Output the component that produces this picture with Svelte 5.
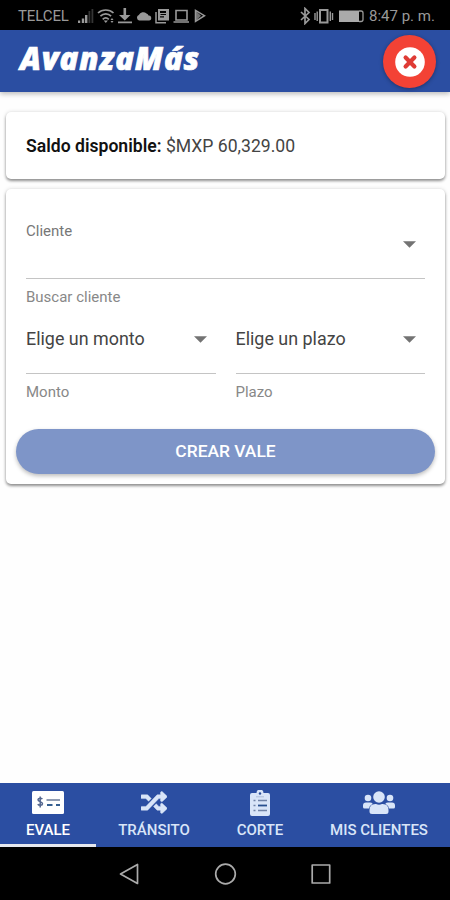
<script>
  const tabs = [
    { id: 'evale', label: 'EVALE', width: 96 },
    { id: 'transito', label: 'TRÁNSITO', width: 116 },
    { id: 'corte', label: 'CORTE', width: 96 },
    { id: 'clientes', label: 'MIS CLIENTES', width: 142 },
  ];
  let active = $state('evale');
</script>

{#snippet caret()}
  <svg class="caret" width="13" height="7" viewBox="0 0 13 7"><path d="M0 .3h13L6.5 6.7z" fill="#737373" /></svg>
{/snippet}

<div class="phone">
  <div class="status">
    <span class="carrier">TELCEL</span>
    <svg class="sys-left" width="130" height="18" viewBox="0 0 130 18" fill="#999">
      <path d="M0 13.500h2.200V16H0zM3.800 11.500h2.400V16H3.800zM7 8h2.400v8H7z" />
      <path d="M10.500 4h1.800v12h-1.800zM13.500 2h1.800v14h-1.800z" opacity=".35" />
      <g fill="none" stroke="#999" stroke-width="1.700">
        <path d="M20 6c4.300-4 11.200-4 15.500 0M22.400 9.200c3-3 7.700-3 10.700 0M24.700 12.300c1.800-1.700 4.300-1.700 6.100 0" />
      </g>
      <path d="M25.700 13.500h4.200l-2.100 2.500zM32.500 13l1.500-2 1.500 2zM32.500 14l1.500 2 1.500-2z" />
      <path d="M45.500 1h2.600v7h4.400l-5.700 5.500L41 8h4.500zM40 14.600h14v1.700H40z" />
      <path d="M61 13.500a3 3 0 0 1-.2-5.600 5 5 0 0 1 7.700-1.500 3 3 0 0 1 2 2.100 2.500 2.500 0 0 1 .5 5z" />
      <path fill-rule="evenodd" d="M80 2h11v11.500H80zM82 4v2h6v1h-5.500v1H88V4zM82 9.300v1.200h4V9.300z" />
      <path d="M78 5v10.800h10" fill="none" stroke="#999" stroke-width="1.500" />
      <path d="M98 3.500h11v9.500H98zM95.500 15h15.500" fill="none" stroke="#999" stroke-width="1.600" />
      <path d="M117.500 3.300 126.500 8.700l-9 5.600z" fill="none" stroke="#999" stroke-width="1.500" />
      <path d="M118 4l5 4.700-5 5z" opacity=".75" />
    </svg>
    <svg class="sys-right" width="66" height="18" viewBox="0 0 66 18">
      <path d="M1 5l8 7.500-4 4V1.500l4 4L1 13" fill="none" stroke="#999" stroke-width="1.700" />
      <path d="M20 3h7.500v12.500H20z" fill="none" stroke="#999" stroke-width="2" />
      <path d="M15 6v7M17.200 4.500v9.500M30.300 4.500v9.500M32.500 6v7" fill="none" stroke="#999" stroke-width="1.400" />
      <rect x="39" y="3.500" width="20" height="11.500" fill="#aaa" />
      <path d="M59 4h2q2 0 2 2v6.500q0 2-2 2h-2" fill="none" stroke="#999" stroke-width="1.300" />
    </svg>
    <span class="clock">8:47 p. m.</span>
  </div>

  <header>
    <h1>AvanzaMás</h1>
    <button class="close" aria-label="Cerrar">
      <svg width="30" height="30" viewBox="0 0 30 30">
        <circle cx="15" cy="15" r="14.800" fill="#fff" />
        <path d="M10.600 10.600l8.800 8.800M19.400 10.600l-8.800 8.800" stroke="#df3b35" stroke-width="4.200" stroke-linecap="round" />
      </svg>
    </button>
  </header>

  <main>
    <section class="card balance"><p><b>Saldo disponible:</b> <span>$MXP 60,329.00</span></p></section>
    <section class="card form">
      <div class="field client">
        <div class="control"><span class="small">Cliente</span>{@render caret()}</div>
        <span class="hint">Buscar cliente</span>
      </div>
      <div class="pair">
        <div class="field">
          <div class="control"><span class="value">Elige un monto</span>{@render caret()}</div>
          <span class="hint">Monto</span>
        </div>
        <div class="field">
          <div class="control"><span class="value">Elige un plazo</span>{@render caret()}</div>
          <span class="hint">Plazo</span>
        </div>
      </div>
      <button class="create">CREAR VALE</button>
    </section>
  </main>

  <nav class="tabs">
    {#each tabs as tab}
      <button class="tab" class:active={active === tab.id} style="width: {tab.width}px" onclick={() => (active = tab.id)}>
        <span class="icon">
          {#if tab.id === 'evale'}
            <svg width="32" height="23" viewBox="0 0 32 23">
              <rect width="32" height="23" rx="1.500" fill="#fff" />
              <path d="M10.300 8.200C9.500 6.700 6 6.800 6 8.700c0 2.300 4.500 1.500 4.500 4 0 2-3.800 2.200-4.700.4M8.200 5.500v11" fill="none" stroke="#53668f" stroke-width="1.500" />
              <path d="M14.500 9H28" stroke="#8491aa" stroke-width="1.800" />
              <path d="M15 14h5.500M24 14h4" stroke="#355f91" stroke-width="1.800" />
            </svg>
          {:else if tab.id === 'transito'}
            <svg width="26" height="25" viewBox="0 0 512 512" preserveAspectRatio="none">
              <path fill="#d9e5f8" stroke="#d9e5f8" stroke-width="8" d="M504.971 359.029c9.373 9.373 9.373 24.569 0 33.941l-80 79.984c-15.010 15.010-40.971 4.490-40.971-16.971V416h-58.785a12.004 12.004 0 0 1-8.773-3.812l-70.556-75.596 53.333-57.143L352 336h32v-39.981c0-21.438 25.943-31.998 40.971-16.971l80 79.981zM12 176h84l52.781 56.551 53.333-57.143-70.556-75.596A11.999 11.999 0 0 0 122.785 96H12c-6.627 0-12 5.373-12 12v56c0 6.627 5.373 12 12 12zm372 0v39.984c0 21.460 25.961 31.980 40.971 16.971l80-79.984c9.373-9.373 9.373-24.569 0-33.941l-80-79.981C409.943 24.021 384 34.582 384 56.019V96h-58.785a12.004 12.004 0 0 0-8.773 3.812L96 336H12c-6.627 0-12 5.373-12 12v56c0 6.627 5.373 12 12 12h110.785c3.326 0 6.503-1.381 8.773-3.812L352 176h32z" />
            </svg>
          {:else if tab.id === 'corte'}
            <svg width="20" height="26" viewBox="0 0 20 26">
              <path fill="#d9e5f8" d="M2 3h4.500a3.500 3.500 0 0 1 7 0H18q2 0 2 2v19q0 2-2 2H2q-2 0-2-2V5q0-2 2-2z" />
              <circle cx="10" cy="3.500" r="1.200" fill="#2c4e98" />
              <path d="M6 6.800h8" stroke="#a5b5d2" stroke-width=".8" />
              <path d="M3.500 10.500h2M8 10.500h9M3.500 15.500h2M3.500 20.500h2M8 20.500h9" stroke="#7183a6" stroke-width="1.500" />
              <path d="M8 15.500h9" stroke="#28508f" stroke-width="1.800" />
            </svg>
          {:else}
            <svg width="32" height="24" viewBox="0 0 32 24" fill="#d9e5f8">
              <circle cx="5" cy="7" r="3.300" /><circle cx="27" cy="7" r="3.300" /><circle cx="16" cy="6" r="5.800" />
              <path d="M3 11.500h4q1.800 0 2.700 1.300Q6.500 14.500 6 17.500H1.500Q0 17.500 0 16v-1.500q0-3 3-3zM29 11.500h-4q-1.800 0-2.700 1.300 3.200 1.700 3.700 4.700h4.500q1.500 0 1.500-1.500v-1.500q0-3-3-3zM12.300 13h.7q3 1.300 6 0h.7q5.800 0 5.800 6v1.500q0 2.500-2.500 2.500H9q-2.500 0-2.500-2.500V19q0-6 5.800-6z" />
            </svg>
          {/if}
        </span>
        <span class="label">{tab.label}</span>
      </button>
    {/each}
  </nav>

  <div class="system-nav">
    <svg width="214" height="24" viewBox="0 0 214 24" fill="none" stroke="#aaa" stroke-width="1.700" stroke-linejoin="round">
      <path d="M18.500 2.500v19L1.500 12z" /><circle cx="106.500" cy="12" r="9.800" /><rect x="193.200" y="3" width="17.500" height="18" />
    </svg>
  </div>
</div>

<style>
  :global(body) { margin: 0; }
  .phone { width: 450px; height: 900px; display: flex; flex-direction: column; overflow: hidden; background: #fefefe; font-family: Roboto, sans-serif; }
  button { border: 0; padding: 0; font-family: inherit; }
  svg { display: block; flex: none; }
  .status { height: 30px; flex: none; box-sizing: border-box; padding: 2px 14px 0 18px; background: #000; color: #999; display: flex; align-items: center; font-size: 15px; white-space: nowrap; }
  .carrier { width: 60px; flex: none; letter-spacing: -.1px; }
  .sys-right { margin-left: auto; }
  .clock { width: 67px; margin-left: 3px; font-size: 15px; }
  header { height: 62px; flex: none; box-sizing: border-box; padding: 1px 14px 0 20px; background: #2b4ea2; display: flex; align-items: flex-start; justify-content: space-between; box-shadow: 0 2px 5px #0004; z-index: 1; }
  h1 { margin: 9px 0 0; font: italic 800 31px/36px "Open Sans", sans-serif; letter-spacing: .85px; color: #fff; -webkit-text-stroke: .7px #fff; }
  .close { width: 53px; height: 53px; margin-top: 4px; border-radius: 50%; background: #f34235; display: flex; align-items: center; justify-content: center; box-shadow: 0 1px 4px #0005; }
  main { flex: 1; padding: 20px 5px 0 6px; }
  .card { box-sizing: border-box; background: #fff; border-radius: 5px; box-shadow: 0 2px 3px #0006, 0 0 4px #0002; }
  .balance { height: 67px; padding: 24px 20px 0; margin-bottom: 10px; }
  p { margin: 0; font-size: 17.6px; line-height: 21px; color: #444; white-space: nowrap; }
  b { font-weight: 600; color: #111; }
  .form { height: 295px; padding: 31px 10px 0; }
  .field { display: flex; flex-direction: column; }
  .client { padding: 0 10px; }
  .control { display: flex; align-items: center; justify-content: space-between; padding-right: 9px; border-bottom: 1px solid #c4c4c4; height: 59px; box-sizing: border-box; }
  .client .control { padding-bottom: 9px; }
  .client .small { margin-bottom: 27px; }
  .small, .hint { color: #777; font-size: 15px; line-height: 18px; }
  .hint { margin-top: 9px; color: #888; }
  .pair { display: grid; grid-template-columns: 1fr 1fr; column-gap: 20px; margin: 9px 10px 0; }
  .pair .control { padding-bottom: 10px; }
  .value { font-size: 17.9px; line-height: 22px; color: #444; }
  .create { width: 419px; height: 45px; margin-top: 28px; padding-bottom: 1px; border-radius: 23px; background: #7e95c8; color: #fff; font-size: 17.400px; font-weight: 500; box-shadow: 0 2px 4px #0004; }
  .tabs { display: flex; height: 64px; flex: none; background: #2b4ea2; }
  .tab { height: 64px; box-sizing: border-box; border-bottom: 3px solid transparent; background: none; color: #d9e5f8; display: flex; flex-direction: column; align-items: center; font-size: 15px; font-weight: 500; white-space: nowrap; }
  .tab.active { color: #fff; border-color: #e6e8ef; }
  .icon { height: 38px; padding-top: 1px; box-sizing: border-box; display: flex; align-items: center; }
  .label { line-height: 18px; }
  .system-nav { height: 53px; flex: none; background: #000; display: flex; align-items: center; padding-left: 119px; }
</style>
